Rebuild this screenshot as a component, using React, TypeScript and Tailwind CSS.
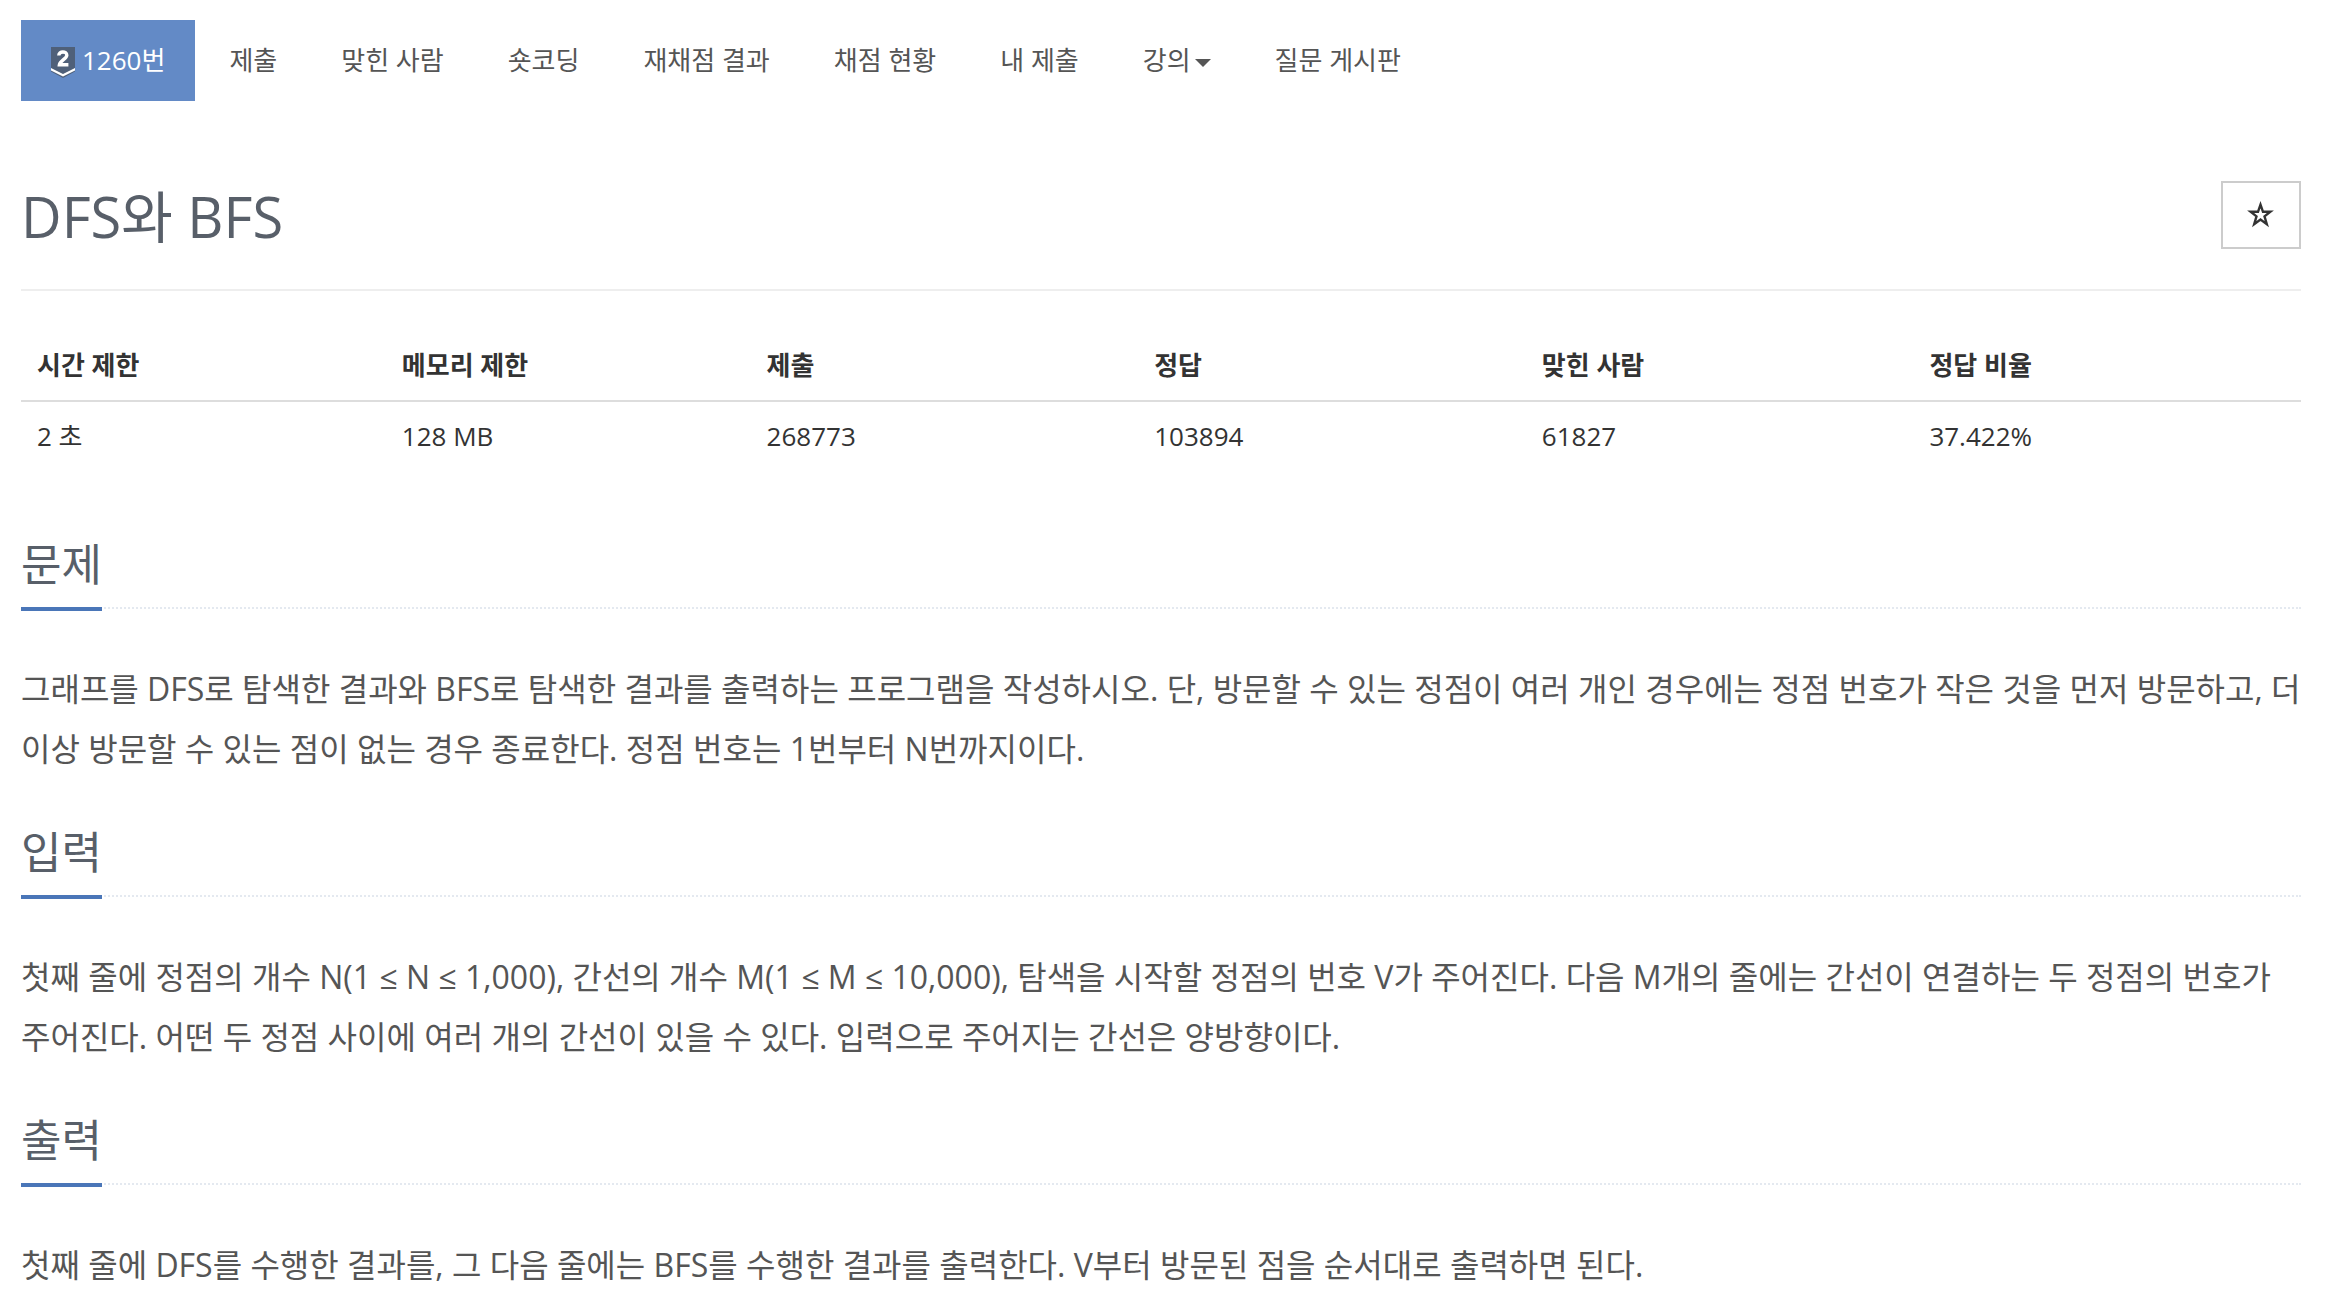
type NavItem = {
  label: string;
  href: string;
  dropdown?: boolean;
};

const navItems: NavItem[] = [
  { label: "제출", href: "#submit" },
  { label: "맞힌 사람", href: "#accepted" },
  { label: "숏코딩", href: "#short" },
  { label: "재채점 결과", href: "#rejudge" },
  { label: "채점 현황", href: "#status" },
  { label: "내 제출", href: "#mine" },
  { label: "강의", href: "#lecture", dropdown: true },
  { label: "질문 게시판", href: "#board" },
];

const stats = [
  { label: "시간 제한", value: "2 초", width: "w-[16%]" },
  { label: "메모리 제한", value: "128 MB", width: "w-[16%]" },
  { label: "제출", value: "268773", width: "w-[17%]" },
  { label: "정답", value: "103894", width: "w-[17%]" },
  { label: "맞힌 사람", value: "61827", width: "w-[17%]" },
  { label: "정답 비율", value: "37.422%", width: "w-[17%]" },
];

const sections = [
  {
    title: "문제",
    body: "그래프를 DFS로 탐색한 결과와 BFS로 탐색한 결과를 출력하는 프로그램을 작성하시오. 단, 방문할 수 있는 정점이 여러 개인 경우에는 정점 번호가 작은 것을 먼저 방문하고, 더 이상 방문할 수 있는 점이 없는 경우 종료한다. 정점 번호는 1번부터 N번까지이다.",
  },
  {
    title: "입력",
    body: "첫째 줄에 정점의 개수 N(1 ≤ N ≤ 1,000), 간선의 개수 M(1 ≤ M ≤ 10,000), 탐색을 시작할 정점의 번호 V가 주어진다. 다음 M개의 줄에는 간선이 연결하는 두 정점의 번호가 주어진다. 어떤 두 정점 사이에 여러 개의 간선이 있을 수 있다. 입력으로 주어지는 간선은 양방향이다.",
  },
  {
    title: "출력",
    body: "첫째 줄에 DFS를 수행한 결과를, 그 다음 줄에는 BFS를 수행한 결과를 출력한다. V부터 방문된 점을 순서대로 출력하면 된다.",
  },
];

const TierBadge = () => (
  <svg viewBox="0 0 24 35" className="h-[35px] w-6" aria-hidden="true">
    <path d="M0 4H24V28.5L12 35L0 28.5Z" fill="#4f6079" />
    <path d="M0 25L12 31L24 25V27.5L12 33.5L0 27.5Z" fill="#fff" />
    <path
      d="M7.8 12.6C7.8 7.8 15.8 7.8 15.8 12.2C15.8 15.6 9 17.6 8.4 21.8H17.4"
      fill="none"
      stroke="#fff"
      strokeWidth="3.4"
    />
  </svg>
);

const Caret = () => (
  <svg viewBox="0 0 16 12" className="ml-1 h-3 w-4" fill="currentColor" aria-hidden="true">
    <path d="M0 4H16L8 12Z" />
  </svg>
);

const StarIcon = () => (
  <svg viewBox="0 0 28 28" className="size-7" aria-hidden="true">
    <path
      d="M13.5 3.6L16 10.8H23.4L17.5 15.4L19.8 23.2L13.5 18.6L7.2 23.2L9.5 15.4L3.6 10.8H11Z"
      fill="none"
      stroke="currentColor"
      strokeWidth="2.4"
      strokeMiterlimit="10"
    />
  </svg>
);

const ProblemNav = () => (
  <nav>
    <ul className="flex flex-wrap gap-1 leading-[41px]">
      <li>
        <a href="#problem" className="flex items-center gap-[7px] bg-[#638ac6] px-[30px] py-5 text-white">
          <TierBadge />
          1260번
        </a>
      </li>
      {navItems.map((item) => (
        <li key={item.href}>
          <a href={item.href} className="flex items-center px-[30px] py-5 text-[#555]">
            {item.label}
            {item.dropdown && <Caret />}
          </a>
        </li>
      ))}
    </ul>
  </nav>
);

const StatsTable = () => (
  <table className="w-full table-fixed text-left leading-[37px] text-[#333]">
    <thead>
      <tr className="border-b-2 border-[#ddd]">
        {stats.map((stat) => (
          <th key={stat.label} className={`${stat.width} px-4 py-4 font-bold`}>
            {stat.label}
          </th>
        ))}
      </tr>
    </thead>
    <tbody>
      <tr>
        {stats.map((stat) => (
          <td key={stat.label} className="px-4 py-4">
            {stat.value}
          </td>
        ))}
      </tr>
    </tbody>
  </table>
);

const App = () => {
  return (
    <div className="min-h-screen bg-white pt-5 pr-[45px] pl-[21px] font-['Open_Sans','Noto_Sans_CJK_KR',sans-serif] text-[26px] text-[#555]">
      <ProblemNav />

      <header className="mt-[76px] flex items-start justify-between border-b-2 border-[#eee] pb-[34px]">
        <h1 className="text-[56px] leading-[78px] text-[#585f69]">DFS와 BFS</h1>
        <button
          type="button"
          aria-label="즐겨찾기"
          className="mt-1 flex h-[68px] w-20 items-center justify-center border-2 border-[#ccc] text-[#333]"
        >
          <StarIcon />
        </button>
      </header>

      <div className="mt-10">
        <StatsTable />
      </div>

      <main className="mt-[58px]">
        {sections.map((section) => (
          <section key={section.title} className="mb-[38px]">
            <div className="border-b-2 border-dotted border-[#e4e9f0]">
              <h2 className="-mb-1 w-fit border-b-4 border-[#4a76b8] pb-2 text-[44px] leading-[70px] text-[#585f69]">
                {section.title}
              </h2>
            </div>
            <p className="mt-[50px] text-[32px] leading-[60px] break-keep">{section.body}</p>
          </section>
        ))}
      </main>
    </div>
  );
};

export default App;
